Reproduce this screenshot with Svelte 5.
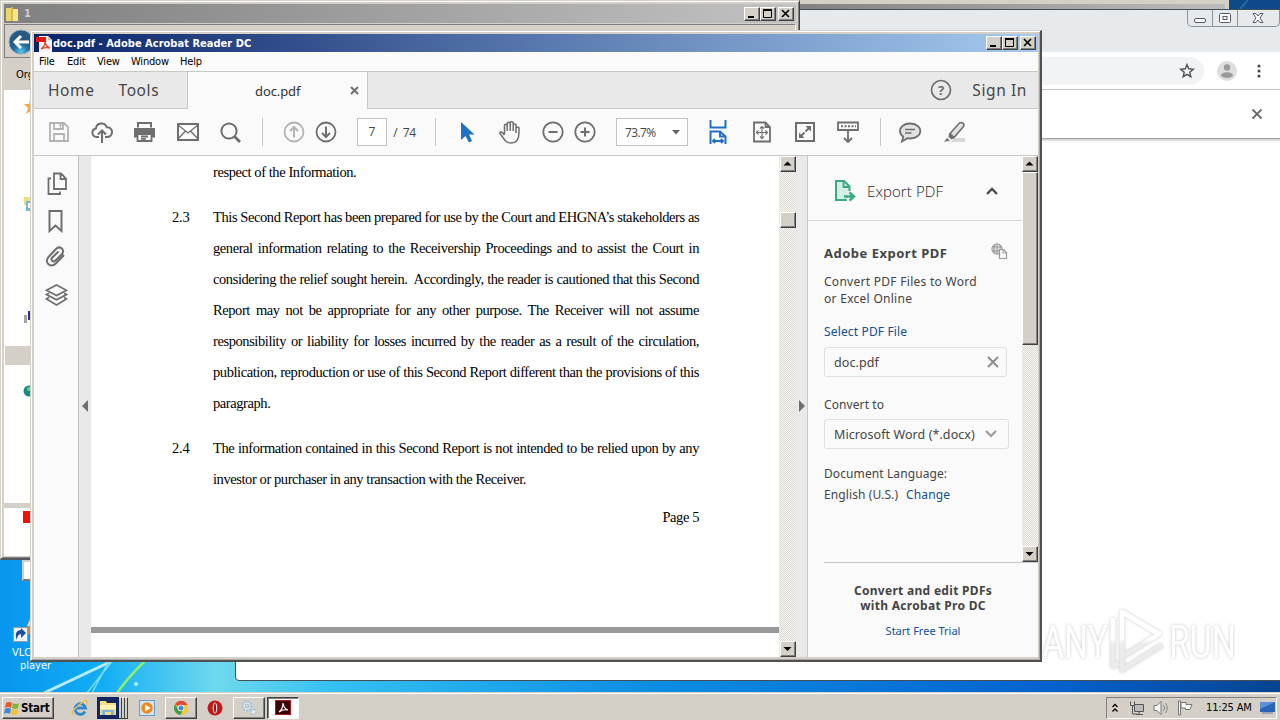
<script>
  const menus = [
    { label: 'File', w: 28 },
    { label: 'Edit', w: 30 },
    { label: 'View', w: 34 },
    { label: 'Window', w: 49 },
    { label: 'Help', w: 30 }
  ];

  const paragraphs = [
    { num: '', lines: ['respect of the Information.'] },
    {
      num: '2.3',
      lines: [
        'This Second Report has been prepared for use by the Court and EHGNA’s stakeholders as',
        'general information relating to the Receivership Proceedings and to assist the Court in',
        'considering the relief sought herein.\u00a0 Accordingly, the reader is cautioned that this Second',
        'Report may not be appropriate for any other purpose. The Receiver will not assume',
        'responsibility or liability for losses incurred by the reader as a result of the circulation,',
        'publication, reproduction or use of this Second Report different than the provisions of this',
        'paragraph.'
      ]
    },
    {
      num: '2.4',
      lines: [
        'The information contained in this Second Report is not intended to be relied upon by any',
        'investor or purchaser in any transaction with the Receiver.'
      ]
    }
  ];
</script>

{#snippet winButtons()}
  <div class="win-buttons">
    <span class="wb"><svg width="14" height="12"><path d="M3 9h6" stroke="#000" stroke-width="2" /></svg></span>
    <span class="wb"><svg width="14" height="12"><path d="M2.500 2.500h8v7h-8zM2 2h9" stroke="#000" fill="none" /><path d="M2 2h9" stroke="#000" stroke-width="2" /></svg></span>
    <span class="wb close"><svg width="14" height="12"><path d="M3 2l7 7M10 2l-7 7" stroke="#000" stroke-width="1.600" /></svg></span>
  </div>
{/snippet}

{#snippet scrollArrow(dir)}
  <span class="sb-btn"><svg width="13" height="13"><path d={dir === 'up' ? 'M6.5 4.5l4 4h-8z' : 'M6.5 9l4-4h-8z'} fill="#000" /></svg></span>
{/snippet}

<div class="desktop">
  <svg class="wallpaper" width="1280" height="720">
    <defs>
      <linearGradient id="sky">
        <stop offset="0" stop-color="#0795ee" />
        <stop offset=".08" stop-color="#12aef5" />
        <stop offset=".17" stop-color="#6ed9ee" />
        <stop offset=".26" stop-color="#35c0f2" />
        <stop offset=".5" stop-color="#0d8fe4" />
        <stop offset=".82" stop-color="#0562cf" />
        <stop offset="1" stop-color="#044490" />
      </linearGradient>
    </defs>
    <rect width="1280" height="720" fill="url(#sky)" />
    <path d="M44 693L112 661" stroke="#b9ecff" stroke-width="3" />
    <path d="M87 693L113 660M92 693L109 661" stroke="#7fdcfa" stroke-width="1.500" />
    <path d="M117 693Q130 675 145 661" stroke="#8df06a" stroke-width="2.500" fill="none" />
    <circle cx="136" cy="684" r="2" fill="#a9f0ff" />
    <rect x="1229" width="51" height="10" fill="#0e4a8a" />
    <path d="M1240 9L1248 0" stroke="#2866a4" stroke-width="2" />
  </svg>

  <div class="desk-icon">
    <svg width="32" height="34">
      <path d="M20 0L12 22h18z" fill="#c98a5c" /><path d="M19 6L15 14h12z" fill="#ddd" />
      <rect x="1.500" y="15.500" width="14" height="14" fill="#eef3f8" stroke="#99a" />
      <path d="M5 28C2 22 5 18 9 18V16L14 21L9 26V22C7 22 5 24 5 28z" fill="#1c4e9c" />
    </svg>
    <span class="vlc">VLC media</span>
    <span class="vlc">player</span>
  </div>

  <div class="back-strip"></div>
  <div class="lower-strip"></div>

  <div class="chrome">
    <div class="chrome-title">
      <div class="aero">
        <span><svg width="14" height="12"><rect x="1.500" y="6.500" width="11" height="4" rx="1.500" fill="#fff" stroke="#555a66" /></svg></span>
        <span><svg width="14" height="12"><rect x="1.500" y="1.500" width="11" height="9" rx="1" fill="#fff" stroke="#555a66" /><rect x="5" y="4.500" width="4" height="3" fill="none" stroke="#555a66" /></svg></span>
        <span class="aero-x"><svg width="14" height="12"><path d="M2 1.500h3l2 2.500 2-2.500h3l-3 4.500 3 4.500h-3l-2-2.500-2 2.500h-3l3-4.500z" fill="#fff" stroke="#555a66" /></svg></span>
      </div>
    </div>
    <div class="chrome-bar">
      <div class="omnibox"><svg width="16" height="16"><path d="M8 1.500l1.700 4.300 4.600.4-3.500 3 1 4.500L8 11.300l-3.800 2.400 1-4.500-3.500-3 4.600-.4z" fill="none" stroke="#4e5257" stroke-width="1.400" /></svg></div>
      <svg class="avatar" width="20" height="20"><circle cx="10" cy="10" r="10" fill="#dedede" /><circle cx="10" cy="6.500" r="3.200" fill="#9a9a9a" /><path d="M4 15c0-5 12-5 12 0q-6 4-12 0" fill="#9a9a9a" /></svg>
      <svg class="dots" width="4" height="16"><circle cx="2" cy="3" r="1.500" fill="#444" /><circle cx="2" cy="8" r="1.500" fill="#444" /><circle cx="2" cy="13" r="1.500" fill="#444" /></svg>
    </div>
    <div class="infobar"><svg width="12" height="12"><path d="M1.500 1.500l9 9M10.500 1.500l-9 9" stroke="#6a6a6a" stroke-width="1.800" /></svg></div>
  </div>

  <div class="explorer">
    <div class="ex-title">
      <svg width="16" height="16"><path d="M1 2h6l1 1v12H1z" fill="#ecd566" /><path d="M7 3h6v12H7z" fill="#f4e68f" /><path d="M6 1h2v14H6z" fill="#d3bb4d" /></svg>
      <span class="ex-name">1</span>
      {@render winButtons()}
    </div>
    <div class="ex-nav">
      <svg width="48" height="33">
        <defs><radialGradient id="orb" cy=".9"><stop stop-color="#56ccea" /><stop offset=".6" stop-color="#1d6fa4" /><stop offset="1" stop-color="#275a82" /></radialGradient></defs>
        <circle cx="16" cy="17" r="12" fill="url(#orb)" stroke="#8da7b8" />
        <path d="M24 17H10M16 11l-6 6 6 6" stroke="#fff" stroke-width="3" fill="none" />
        <circle cx="45" cy="17" r="12" fill="#7e8b94" />
      </svg>
    </div>
    <div class="ex-tools">Organize</div>
    <div class="ex-tree">
      <svg width="27" height="466">
        <path d="M26 10l-1 4h-5l4 4-2 6 5-3z" fill="#f0ab3c" />
        <rect x="20" y="107" width="8" height="8" fill="#f0df79" /><rect x="22" y="111" width="6" height="10" fill="#79b6d4" /><rect x="24" y="113" width="4" height="5" fill="#fff" />
        <rect x="20" y="225" width="3" height="8" fill="#a3a6a9" /><rect x="24" y="221" width="3" height="9" fill="#343274" />
        <rect x="1" y="256" width="26" height="19" fill="#d4d0c8" />
        <circle cx="25" cy="301" r="5.500" fill="#168d7c" /><circle cx="25" cy="299" r="2" fill="#5ed489" />
        <rect x="0" y="413" width="27" height="5" fill="#d4d0c8" />
        <rect x="19" y="421" width="8" height="12" fill="#ef1300" />
      </svg>
    </div>
  </div>

  <div class="reader">
    <div class="title">
      <svg width="17" height="17">
        <path d="M3 1h9l4 4v12H3z" fill="#f4f1ee" /><path d="M12 1l4 4h-4z" fill="#c9c2bb" />
        <rect x="0" y="2" width="10" height="5" fill="#e5170c" />
        <path d="M5 14q4-3 4-7 1 5 5 6-5-1-9 1" fill="none" stroke="#e2422f" stroke-width="1.300" />
      </svg>
      <span class="title-text">doc.pdf - Adobe Acrobat Reader DC</span>
      {@render winButtons()}
    </div>
    <div class="menubar">
      {#each menus as m}
        <span style="width: {m.w}px">{m.label}</span>
      {/each}
    </div>
    <div class="tabs">
      <div class="tab-left"><span>Home</span><span>Tools</span></div>
      <div class="tab-doc">
        <span>doc.pdf</span>
        <svg width="9" height="9"><path d="M1 1l7 7M8 1l-7 7" stroke="#6e6e6e" stroke-width="2" /></svg>
      </div>
      <div class="tab-right">
        <svg width="22" height="22"><circle cx="11" cy="11" r="9.500" fill="none" stroke="#6e6e6e" stroke-width="1.700" /><text x="11" y="15.500" text-anchor="middle" class="qmark">?</text></svg>
        <span>Sign In</span>
      </div>
    </div>

    <div class="toolbar">
      <svg class="ico dim" viewBox="0 0 24 24"><path d="M3 3h14l4 4v14H3zM7 3v6h9V3M7 21v-7h10v7M13.500 4v3.500" /></svg>
      <svg class="ico" viewBox="0 0 24 24"><path d="M9 17H6.500a4.300 4.300 0 0 1-.6-8.500 5.600 5.600 0 0 1 10.800-1.300 4.900 4.900 0 0 1 .8 9.800H15M12 23V11M8 14.500l4-4 4 4" stroke-width="2" /></svg>
      <svg class="ico" viewBox="0 0 24 24"><path d="M5 7.500V3h13v4.500" stroke-width="2" /><path d="M1 8h21v9.500h-3.500V14h-14v3.500H1z" fill="#6e6e6e" stroke="none" /><path d="M4.500 14h14v7h-14zM8 16.500h7M8 18.800h5" /></svg>
      <svg class="ico" viewBox="0 0 24 24"><path d="M2 4h20v16H2z" stroke-width="2" /><path d="M2 5l10 8 10-8M2 19l7.500-8M22 19l-7.500-8" stroke-width="1.300" /></svg>
      <svg class="ico" viewBox="0 0 24 24"><circle cx="10" cy="11" r="7.600" stroke-width="2" /><path d="M15.500 16.500l5.500 5.500" stroke-width="2.800" /></svg>
      <i class="sep"></i>
      <svg class="ico dim" viewBox="0 0 24 24"><circle cx="12" cy="12" r="9.500" /><path d="M12 17.500V7M8 11l4-4 4 4" stroke-width="2" /></svg>
      <svg class="ico" viewBox="0 0 24 24"><circle cx="12" cy="12" r="9.500" /><path d="M12 6.500V17M8 13l4 4 4-4" stroke-width="2" /></svg>
      <span class="pagebox">7</span>
      <span class="pages">/&nbsp; 74</span>
      <i class="sep"></i>
      <svg class="ico" viewBox="0 0 24 24"><path d="M6 2v18l4.500-4 3.500 6.500 3-1.500-3-6.500h5.500z" fill="#2071c4" stroke="none" /></svg>
      <svg class="ico" viewBox="0 0 24 24"><path d="M6.500 14V5.500c0-1.600 2.700-1.600 2.700 0V11V3.500c0-1.600 3-1.600 3 0V11V3c0-1.600 3-1.600 3 0v8V5c0-1.500 2.800-1.500 2.800 0v8V8c0-1.500 3-1.500 3 0 0 7 .5 15-8 15-6 0-6.500-4-11-9.500-1-1.500 1.500-3 4.500 1.500" stroke-width="1.500" /></svg>
      <svg class="ico" viewBox="0 0 24 24"><circle cx="12" cy="12" r="9.700" /><path d="M7.500 12h9" stroke-width="2" /></svg>
      <svg class="ico" viewBox="0 0 24 24"><circle cx="12" cy="12" r="9.700" /><path d="M7.500 12h9M12 7.500v9" stroke-width="2" /></svg>
      <span class="zoombox"><span>73.7%</span><svg width="8" height="5"><path d="M0 0h8L4 4.500z" fill="#666" /></svg></span>
      <svg class="ico blue" viewBox="0 0 24 24"><path d="M4.500 0v7.500h15V0M4.500 24V11.500h9.500l5.500 5V24M14 11.500v5h5.500M7 21h10M9 19l-2 2 2 2M15 19l2 2-2 2" stroke-width="2" /></svg>
      <svg class="ico" viewBox="0 0 24 24"><path d="M4 2.500h11.500l4.500 4.500v14.500H4zM15.500 2.500V7H20" /><path d="M12 6.500v12M6.500 12.500h11M10 8.500l2-2 2 2M10 16.500l2 2 2-2M8.500 10.500l-2 2 2 2M15.500 10.500l2 2-2 2" stroke-width="1.100" /></svg>
      <svg class="ico" viewBox="0 0 24 24"><path d="M3 3h18v18H3z" stroke-width="2" /><path d="M12.500 6H18v5.500zM6 12.500V18h5.500z" fill="#6e6e6e" stroke="none" /><path d="M12.500 11.500L17 7M7 17l4.500-4.500" /></svg>
      <svg class="ico" viewBox="0 0 24 24"><path d="M2 2.500h20v7.500H2zM12 11v11M8 18l4 4 4-4" /><path d="M5 6.300h15" stroke-dasharray="2 1.500" stroke-width="2" /></svg>
      <i class="sep"></i>
      <svg class="ico" viewBox="0 0 24 24"><path d="M12 3.500c6 0 10.300 3.300 10.300 7.500S18 18.500 12.500 18.500c-1 0-2 0-3-.3L4 21.500l1.200-5C3 15 2 13 2 11c0-4.200 4-7.500 10-7.500z" fill="#e2e2e2" /><path d="M7 9.500h10M7 13h6.500" stroke-width="1.300" /></svg>
      <svg class="ico" viewBox="0 0 24 24"><path d="M12 18h11v4H9z" fill="#d8d8d8" stroke="none" /><path d="M8 13.500L17.500 3c2.500-1.500 5.500.8 4 3.500L12 17.500z" fill="#e2e2e2" stroke-width="1.600" /><path d="M7 13l5.500 5-3 1.500-3-2.500zM5 18l3 2.500L2 22z" fill="#6e6e6e" stroke="none" /></svg>
    </div>

    <div class="body">
      <div class="rail">
        <svg class="ico" viewBox="0 0 24 24"><path d="M10 1.500h7L22 6.500v10.500H10zM16.500 1.500V7H22M7 6.500H4.500v15.500H16v-2.500" /></svg>
        <svg class="ico" viewBox="0 0 24 24"><path d="M5.500 2h12v20l-6-5.500-6 5.500z" stroke-width="2" /></svg>
        <svg class="ico" viewBox="0 0 24 24"><path d="M20.500 11l-8.200 8.500c-5.300 5-12-1-7.300-6.500L12.500 5c4-4 9.500 1 6 5L12 16.500c-2.500 2.300-5.300-.5-3.200-3L15 7.500" transform="translate(-.5 -1)" stroke-width="2" /></svg>
        <svg class="ico" viewBox="0 0 24 24"><path d="M12.500 2l10 5.300-10 5.300-10-5.300zM5 10.300l-2.500 1.200 10 5.200 10-5.200-2.500-1.200M5 14.300L2.500 16l10 6 10-6-2.500-1.700" stroke-width="1.700" /></svg>
      </div>
      <div class="handle left"><svg width="6" height="12"><path d="M6 0v12L0 6z" fill="#6e6e6e" /></svg></div>
      <div class="doc">
        <div class="page">
          {#each paragraphs as p}
            <div class="para">
              <div class="num">{p.num}</div>
              <div class="lines">
                {#each p.lines as line, i}
                  <div class="line" class:last={i === p.lines.length - 1}>{line}</div>
                {/each}
              </div>
            </div>
          {/each}
          <div class="pageno">Page 5</div>
        </div>
        <div class="pagegap"></div>
        <div class="nextpage"></div>
      </div>
      <div class="scroll">
        {@render scrollArrow('up')}
        <span class="thumb small"></span>
        <span class="fill"></span>
        {@render scrollArrow('down')}
      </div>
      <div class="handle right"><svg width="6" height="12"><path d="M0 0v12l6-6z" fill="#6e6e6e" /></svg></div>
      <div class="side">
        <div class="side-main">
          <div class="panel">
            <div class="panel-head">
              <svg width="24" height="24"><path d="M14 21H3V2h8l5.500 5.500V12" fill="#d5efe6" stroke="#3aa886" stroke-width="2" /><path d="M10.500 2v6h6" fill="none" stroke="#3aa886" stroke-width="1.800" /><path d="M11 17.500h9M16.500 13.500l4.500 4-4.500 4" fill="none" stroke="#3aa886" stroke-width="2.400" /></svg>
              <span>Export PDF</span>
              <svg class="chev" width="12" height="8"><path d="M1 7l5-5 5 5" fill="none" stroke="#4b4b4b" stroke-width="2.400" /></svg>
            </div>
            <div class="panel-body">
              <div class="h-row">
                <b>Adobe Export PDF</b>
                <svg width="17" height="17"><circle cx="6" cy="6" r="5.200" fill="#ddd" stroke="#999" /><path d="M1 4h10M1 8h8M6 1v10M3.500 1.500q-1.500 4.500 0 9M8.500 1.500q1 2 1 4" fill="none" stroke="#999" /><path d="M8.500 6.500h4l3 3v6h-7z" fill="#fafafa" stroke="#999" stroke-width="1.200" /><path d="M12 6.500v3.500h3.500" fill="none" stroke="#999" /></svg>
              </div>
              <p class="desc">Convert PDF Files to Word<br />or Excel Online</p>
              <a class="select">Select PDF File</a>
              <div class="field"><span>doc.pdf</span><svg width="12" height="12"><path d="M1 1l10 10M11 1L1 11" stroke="#8c8c8c" stroke-width="2" /></svg></div>
              <span class="lbl">Convert to</span>
              <div class="field drop"><span>Microsoft Word (*.docx)</span><svg width="12" height="8"><path d="M1 1l5 5 5-5" fill="none" stroke="#999" stroke-width="2" /></svg></div>
              <span class="lbl lang">Document Language:</span>
              <div class="lang-row"><span>English (U.S.)</span><a>Change</a></div>
            </div>
          </div>
          <div class="scroll">
            {@render scrollArrow('up')}
            <span class="thumb big"></span>
            <span class="fill"></span>
            {@render scrollArrow('down')}
          </div>
        </div>
        <div class="promo">
          <b>Convert and edit PDFs</b>
          <b>with Acrobat Pro DC</b>
          <a>Start Free Trial</a>
        </div>
      </div>
    </div>
  </div>

  <svg class="watermark" width="204" height="80">
    <defs>
      <linearGradient id="wm" gradientUnits="userSpaceOnUse" x1="0" y1="0" x2="0" y2="70">
        <stop offset=".5" stop-color="#fff" />
        <stop offset=".58" stop-color="#ebebeb" />
      </linearGradient>
    </defs>
    <g class="wm-text"><text transform="translate(4 54) scale(.72 1)">ANY</text><text transform="translate(131 54) scale(.72 1)">RUN</text></g>
    <path class="wm-mark" d="M75 14v48l6-3M84 8l37 22-37 23zM84 8v58l40-25" />
  </svg>

  <div class="taskbar">
    <div class="start">
      <svg width="16" height="16"><path d="M2 3q3-2 6 0L7 8Q4 6 1 8z" fill="#e8592b" /><path d="M9 3q3 2 6 0l-1 5q-3 2-6 0z" fill="#7cb932" /><path d="M1 9q3-2 6 0l-1 5q-3-2-6 0z" fill="#3e87d8" /><path d="M8 9q3 2 6 0l-1 5q-3 2-6 0z" fill="#f7bf28" /></svg>
      <span>Start</span>
    </div>
    <div class="quick">
      <svg class="ie" width="18" height="18"><path d="M14 12.500A5.300 5.300 0 1 1 14.500 9H4.500" fill="none" stroke="#2d87d2" stroke-width="2.800" /><path d="M2 16Q-1 13 8 6T16 2q1 1-1 4" fill="none" stroke="#eac052" stroke-width="1.500" /></svg>
      <div class="stack">
        <span class="folder"><svg width="18" height="16"><path d="M1 1h6l1 2h9v12H1z" fill="#f2de86" /><path d="M1 5h16v4H1z" fill="#fff3b8" /><path d="M3 15v-5h12v5h-3v-3H6v3z" fill="#7eb8dd" /></svg></span>
        <i></i><i></i><i></i>
      </div>
      <svg class="media" width="16" height="16"><rect x=".5" y=".5" width="15" height="15" fill="#cfe3f4" stroke="#6ba0d0" /><circle cx="8" cy="8" r="5.700" fill="#f08a1c" /><path d="M6 4.500l5.500 3.500L6 11.500z" fill="#fff" /></svg>
      <div class="task">
        <svg width="16" height="16"><circle cx="8" cy="8" r="7" fill="#fbc32c" /><path d="M8 8L2 4.300A7 7 0 0 1 14.500 5H8z" fill="#e04a3a" /><path d="M2 4.300A7 7 0 0 0 7.500 15L10 10 5 9z" fill="#3c9e4d" /><circle cx="8" cy="8" r="3.300" fill="#fff" /><circle cx="8" cy="8" r="2.500" fill="#4a86e0" /></svg>
      </div>
      <svg class="opera" width="16" height="16"><circle cx="8" cy="8" r="7.500" fill="#c4191a" /><ellipse cx="8" cy="8" rx="2.300" ry="5.500" fill="#e7dcdc" /><ellipse cx="8" cy="8" rx="1" ry="4.700" fill="#8e1114" /></svg>
      <div class="task gears">
        <svg width="18" height="18"><circle cx="7" cy="7" r="4.500" fill="#dfeaf2" stroke="#a3bfd4" stroke-width="2" stroke-dasharray="2 1" /><circle cx="7" cy="7" r="2" fill="#d4d0c8" stroke="#a3bfd4" /><circle cx="13.500" cy="13" r="2.500" fill="#e6eef4" stroke="#9dbad0" stroke-width="1.500" stroke-dasharray="1.500 1" /></svg>
      </div>
      <div class="task pressed">
        <svg width="16" height="15"><rect width="16" height="15" fill="#3a0507" /><rect x=".5" y=".5" width="15" height="14" fill="none" stroke="#b3181a" /><path d="M4 12q4-3 4-9 1 6 5 7-5-1-9 2" fill="none" stroke="#fff" stroke-width="1.200" /></svg>
      </div>
    </div>
    <div class="tray">
      <svg class="up" width="8" height="10"><path d="M1.500 4L4 1.500 6.500 4M1.500 8.500L4 6l2.500 2.500" fill="none" stroke="#000" stroke-width="1.300" /></svg>
      <svg class="net" width="16" height="16"><path d="M5.500 4.500h9v7h-9zM7 14.500h7M10 12v2" fill="#bbb" stroke="#555" /><path d="M1.500 1.500v4h4v-4M3.500 6v8H8" fill="none" stroke="#555" /></svg>
      <svg class="vol" width="16" height="16"><path d="M1 5.500h3l4-4v13l-4-4H1z" fill="#f4f4f4" stroke="#777" /><path d="M10.500 5q2 3 0 6M12.500 3q3.500 5 0 10" fill="none" stroke="#888" /></svg>
      <svg class="flag" width="17" height="16"><path d="M1.500 1h2v14h-2z" fill="#f6f6f6" stroke="#777" /><path d="M4 2.500h5v2h6l-2 5H8.500V8H4z" fill="#f6f6f6" stroke="#777" /></svg>
      <span class="clock">11:25 AM</span>
      <svg class="mon" width="15" height="14"><rect width="15" height="10" y="1" fill="#2a63b8" /><path d="M0 1h15L0 8z" fill="#5a92d8" /><rect x="2" y="11" width="11" height="2" fill="#9aa4b0" /></svg>
    </div>
  </div>
</div>

<style>
  :global(body) {
    margin: 0;
    overflow: hidden;
  }

  .desktop {
    position: relative;
    width: 1280px;
    height: 720px;
    overflow: hidden;
    font-family: 'DejaVu Sans Condensed', 'DejaVu Sans', sans-serif;
    font-size: 11px;
    color: #000;
  }

  .desktop * {
    box-sizing: border-box;
  }

  svg {
    display: block;
    flex: none;
  }

  .wallpaper {
    position: absolute;
    inset: 0;
  }

  .desk-icon {
    position: absolute;
    left: 12px;
    top: 612px;
    width: 60px;
    display: flex;
    flex-direction: column;
    color: #fff;
    line-height: 13px;
    white-space: nowrap;
  }

  .vlc:last-child {
    padding-left: 8px;
  }

  /* windows */
  .back-strip {
    position: absolute;
    left: 800px;
    top: 0;
    width: 429px;
    height: 10px;
    border-top: 4px solid #d4d0c8;
    border-right: 4px solid #d4d0c8;
    background: linear-gradient(90deg, #828282, #bcbcbc);
  }

  .lower-strip {
    position: absolute;
    left: 22px;
    top: 560px;
    width: 12px;
    height: 21px;
    border: 2px solid #d4d0c8;
    border-bottom-color: #777;
    background: #fff;
  }

  .chrome {
    position: absolute;
    left: 235px;
    top: 9px;
    width: 1060px;
    height: 672px;
    border: 1px solid #454d55;
    border-radius: 0 0 0 4px;
    background: #fff;
  }

  .chrome-title {
    height: 42px;
    background: #e7eaed;
    padding-left: 951px;
  }

  .aero {
    display: flex;
    width: 93px;
    height: 17px;
    border: 1px solid #8c9299;
    border-top: 0;
    border-radius: 0 0 5px 5px;
  }

  .aero span {
    width: 25px;
    padding: 2px 5px;
    border-right: 1px solid #8c9299;
  }

  .aero .aero-x {
    width: 42px;
    padding-left: 13px;
    border: 0;
  }

  .chrome-bar {
    display: flex;
    align-items: center;
    height: 38px;
    border-bottom: 1px solid #c3c5c7;
  }

  .omnibox {
    display: flex;
    justify-content: flex-end;
    align-items: center;
    width: 968px;
    height: 28px;
    padding-right: 9px;
    border-radius: 14px;
    background: #f1f3f4;
  }

  .avatar {
    margin-left: 13px;
  }

  .dots {
    margin-left: 20px;
  }

  .infobar {
    height: 49px;
    padding: 18px 0 0 1015px;
    border-bottom: 1px solid #a5a5a5;
    box-shadow: 0 1px 3px #bbb;
  }

  .explorer {
    position: absolute;
    left: 0;
    top: 0;
    width: 800px;
    height: 560px;
    padding: 2px;
    border: 1px solid #d4d0c8;
    border-right-color: #404040;
    border-bottom: 2px solid #55585c;
    background: #d4d0c8;
    box-shadow: inset 1px 1px #fff, inset -1px -1px #808080;
  }

  .ex-title {
    display: flex;
    align-items: center;
    height: 19px;
    padding: 0 2px 0 1px;
    margin: 1px 1px 0;
    background: linear-gradient(90deg, #808080, #c2c2c2);
    color: #d4d0c8;
  }

  .ex-name {
    font-weight: bold;
    margin-left: 3px;
  }

  .win-buttons {
    display: flex;
    margin-left: auto;
  }

  .wb {
    width: 16px;
    height: 14px;
    border: 1px solid;
    border-color: #fff #404040 #404040 #fff;
    box-shadow: inset -1px -1px #808080;
    background: #d4d0c8;
  }

  .wb.close {
    margin-left: 2px;
  }

  .ex-nav {
    height: 34px;
    margin: 1px 1px 0;
    border: 1px solid #808080;
    border-right-color: #fff;
  }

  .ex-tools {
    height: 32px;
    padding: 10px 0 0 13px;
    background: #d4d0c8;
  }

  .ex-tree {
    height: 466px;
    margin-left: 1px;
    background: #fff;
  }

  /* reader */
  .reader {
    position: absolute;
    left: 30px;
    top: 30px;
    width: 1012px;
    height: 632px;
    padding: 3px 2px 3px 3px;
    border: 1px solid #d4d0c8;
    border-right: 2px solid #505050;
    border-bottom: 2px solid #505050;
    background: #d4d0c8;
    box-shadow: inset 1px 1px #fff, inset -1px -1px #aaa;
    display: flex;
    flex-direction: column;
  }

  .title {
    display: flex;
    align-items: center;
    height: 18px;
    padding: 0 2px;
    background: linear-gradient(90deg, #0a246a, #a6caf0);
    color: #fff;
    font-weight: bold;
  }

  .title-text {
    white-space: nowrap;
    letter-spacing: 0.02px;
  }

  .menubar {
    display: flex;
    height: 20px;
    padding-left: 5px;
    align-items: center;
    background: #fafafa;
    border-bottom: 1px solid #c9c9c4;
    letter-spacing: -0.2px;
  }

  .menubar span {
    flex: none;
  }

  .tabs {
    display: flex;
    height: 37px;
    background: #e9e9e9;
    color: #464646;
    font-family: 'Noto Sans', 'Open Sans', sans-serif;
    font-size: 15.5px;
  }

  .tab-left {
    display: flex;
    align-items: center;
    width: 154px;
    padding-left: 14px;
    gap: 24px;
    border-right: 1px solid #c8c8c8;
    border-bottom: 1px solid #c8c8c8;
    letter-spacing: 0.6px;
  }

  .tab-doc {
    display: flex;
    align-items: center;
    width: 180px;
    padding-left: 67px;
    background: #fafafa;
    border-right: 1px solid #c8c8c8;
    font-size: 13px;
    color: #333;
    letter-spacing: -0.1px;
  }

  .tab-doc svg {
    margin: 0 8px 0 auto;
  }

  .tab-right {
    display: flex;
    align-items: center;
    justify-content: flex-end;
    flex: 1;
    padding-right: 11px;
    gap: 20px;
    border-bottom: 1px solid #c8c8c8;
    letter-spacing: 0.6px;
  }

  .qmark {
    font: bold 13px 'Noto Sans', sans-serif;
    fill: #6e6e6e;
    letter-spacing: 0;
  }

  .toolbar {
    display: grid;
    grid-template-columns: 42px 44px 41px 45px 42px 21px 42px 22px 50px 35px 26px 38px 48px 38px 26px 108px 24px 64px 22px 64px 0 60px 28px;
    align-items: center;
    justify-items: center;
    justify-content: start;
    height: 47px;
    padding-left: 4px;
    background: #fafafa;
    border-bottom: 1px solid #c8c8c8;
    font-family: 'Open Sans', 'Noto Sans', sans-serif;
    font-size: 12px;
    color: #444;
  }

  .ico {
    width: 24px;
    height: 24px;
    fill: none;
    stroke: #6e6e6e;
    stroke-width: 1.8;
  }

  .dim {
    stroke: #b3b3b3;
  }

  .blue {
    stroke: #2071c4;
  }

  .sep {
    width: 1px;
    height: 28px;
    background: #c8c8c8;
  }

  .pagebox {
    justify-self: end;
    width: 30px;
    height: 28px;
    line-height: 26px;
    text-align: center;
    border: 1px solid #c2c2c2;
    background: #fff;
  }

  .pages {
    white-space: nowrap;
    letter-spacing: -0.4px;
  }

  .zoombox {
    display: flex;
    align-items: center;
    justify-content: space-between;
    width: 72px;
    height: 28px;
    padding: 0 7px 0 8px;
    border: 1px solid #c2c2c2;
    background: #fff;
    letter-spacing: -0.6px;
  }

  .body {
    display: flex;
    flex: 1;
    min-height: 0;
    background: #fafafa;
  }

  .rail {
    display: flex;
    flex-direction: column;
    align-items: center;
    gap: 14px;
    width: 45px;
    padding-top: 16px;
    border-right: 1px solid #c0c0c0;
  }

  .rail .ico:nth-child(2) {
    margin-top: -1px;
  }

  .rail .ico:nth-child(3) {
    margin-top: -2px;
  }

  .handle {
    display: flex;
    align-items: center;
    width: 12px;
    padding: 0 0 1px 3px;
    background: #e9e9e9;
  }

  .handle.right {
    border-right: 1px solid #c8c8c8;
  }

  .doc {
    display: flex;
    flex-direction: column;
    width: 688px;
    background: #fff;
    font-family: 'Liberation Serif', serif;
    font-size: 14.5px;
    letter-spacing: -0.42px;
    color: #000;
  }

  .page {
    height: 471px;
    padding: 1px 0 0 81px;
  }

  .para {
    display: flex;
    margin-bottom: 14px;
  }

  .num {
    width: 41px;
    line-height: 31px;
    letter-spacing: -0.2px;
  }

  .lines {
    width: 486px;
  }

  .line {
    height: 31px;
    line-height: 31px;
    white-space: nowrap;
    text-align: justify;
    text-align-last: justify;
  }

  .line.last {
    text-align-last: left;
  }

  .pageno {
    width: 527px;
    margin-top: -2px;
    text-align: right;
    line-height: 20px;
  }

  .pagegap {
    height: 6px;
    background: #999;
  }

  .nextpage {
    flex: 1;
  }

  .scroll {
    display: flex;
    flex-direction: column;
    flex: none;
    width: 17px;
    background: repeating-conic-gradient(#dcd9d3 0 25%, #f8f7f5 0 50%) 0 0 / 2px 2px;
  }

  .sb-btn,
  .thumb {
    width: 16px;
    height: 16px;
    flex: none;
    border: 1px solid;
    border-color: #fff #404040 #404040 #fff;
    box-shadow: inset -1px -1px #808080;
    background: #d4d0c8;
    margin-left: 1px;
  }

  .thumb.small {
    margin-top: 40px;
  }

  .thumb.big {
    height: 173px;
  }

  .fill {
    flex: 1;
  }

  .side {
    display: flex;
    flex-direction: column;
    flex: 1;
    min-width: 0;
    color: #444;
    font-family: 'Noto Sans', 'Open Sans', sans-serif;
    font-size: 12px;
  }

  .side-main {
    display: flex;
    height: 406px;
  }

  .side-main .scroll {
    width: 16px;
  }

  .side-main .sb-btn,
  .side-main .thumb {
    margin-left: 0;
  }

  .panel {
    width: 214px;
  }

  .panel-head {
    display: flex;
    align-items: center;
    height: 65px;
    padding: 6px 24px 0 25px;
    border-bottom: 1px solid #d5d5d5;
    font-family: 'Open Sans', sans-serif;
    font-weight: 300;
    font-size: 15px;
    color: #222;
  }

  .panel-head span {
    margin-left: 10px;
    white-space: nowrap;
    letter-spacing: 0.1px;
  }

  .chev {
    margin-left: auto;
  }

  .panel-body {
    display: flex;
    flex-direction: column;
    padding: 22px 14px 0 16px;
    height: 341px;
    white-space: nowrap;
  }

  .h-row {
    display: flex;
    justify-content: space-between;
    font-size: 13px;
    line-height: 20px;
    letter-spacing: 0.5px;
  }

  .desc {
    margin: 10px 0 0;
    line-height: 17px;
    letter-spacing: 0.28px;
  }

  a {
    color: #10508f;
  }

  .select {
    margin-top: 16px;
    line-height: 17px;
    letter-spacing: 0.15px;
  }

  .field {
    display: flex;
    align-items: center;
    justify-content: space-between;
    height: 30px;
    width: 183px;
    margin-top: 7px;
    padding: 0 7px 0 9px;
    border: 1px solid #e0e0e0;
    border-radius: 3px;
    font-size: 12.5px;
    letter-spacing: 0.08px;
  }

  .field.drop {
    width: 185px;
    margin-top: 6px;
    padding-right: 11px;
    flex: none;
  }

  .lbl {
    margin-top: 19px;
    line-height: 17px;
    letter-spacing: 0.1px;
  }

  .lbl.lang {
    margin-top: 16px;
  }

  .lang-row {
    display: flex;
    gap: 8px;
    margin-top: 4px;
    line-height: 17px;
    letter-spacing: 0.1px;
  }

  .promo {
    display: flex;
    flex-direction: column;
    align-items: center;
    flex: 1;
    margin-left: 16px;
    padding: 20px 16px 0 0;
    border-top: 1px solid #c8c8c8;
    line-height: 15px;
    letter-spacing: 0.3px;
    white-space: nowrap;
  }

  .promo a {
    margin-top: 10px;
    font-size: 11px;
    letter-spacing: 0;
  }

  /* watermark */
  .watermark {
    position: absolute;
    left: 1038px;
    top: 604px;
    filter: drop-shadow(0 0 1.5px #c4c4c4);
  }

  .wm-text {
    font: 47px 'Roboto', 'Liberation Sans', sans-serif;
    fill: url(#wm);
  }

  .wm-mark {
    fill: none;
    stroke: url(#wm);
    stroke-width: 5;
    stroke-linejoin: round;
  }

  /* taskbar */
  .taskbar {
    position: absolute;
    left: 0;
    top: 692px;
    width: 1280px;
    height: 28px;
    display: flex;
    align-items: center;
    padding: 2px 3px 0 2px;
    border-top: 1px solid #d4d0c8;
    box-shadow: inset 0 1px #fff;
    background: #d4d0c8;
  }

  .start,
  .task {
    display: flex;
    align-items: center;
    height: 22px;
    border: 1px solid;
    border-color: #fff #404040 #404040 #fff;
    box-shadow: inset -1px -1px #808080;
  }

  .start {
    width: 52px;
    padding-left: 1px;
    font-weight: bold;
    font-size: 11.5px;
    letter-spacing: -0.2px;
  }

  .start span {
    margin-left: 1px;
  }

  .quick {
    display: flex;
    align-items: center;
    margin-left: 17px;
  }

  .stack {
    display: flex;
    height: 22px;
    margin-left: 8px;
  }

  .folder {
    width: 22px;
    padding: 2px 1px;
    border: 1px solid #0a246a;
    background: #16275e;
  }

  .stack i {
    width: 3px;
    border-right: 1px solid #404040;
    border-top: 1px solid #fff;
    border-bottom: 1px solid #404040;
  }

  .media {
    margin-left: 11px;
  }

  .task {
    width: 32px;
    justify-content: center;
    margin-left: 10px;
  }

  .opera {
    margin-left: 10px;
  }

  .task.pressed {
    margin-left: 2px;
    background: #fff;
    border-color: #404040 #fff #fff #404040;
    box-shadow: inset 1px 1px #808080;
  }

  .tray {
    display: flex;
    align-items: center;
    width: 171px;
    height: 22px;
    margin-left: auto;
    padding-left: 4px;
    border: 1px solid;
    border-color: #808080 #fff #fff #808080;
  }

  .net {
    margin-left: 10px;
  }

  .vol,
  .flag {
    margin-left: 8px;
  }

  .clock {
    width: 47px;
    margin-left: 12px;
    white-space: nowrap;
    letter-spacing: -0.15px;
  }

  .mon {
    margin-left: 7px;
  }
</style>
